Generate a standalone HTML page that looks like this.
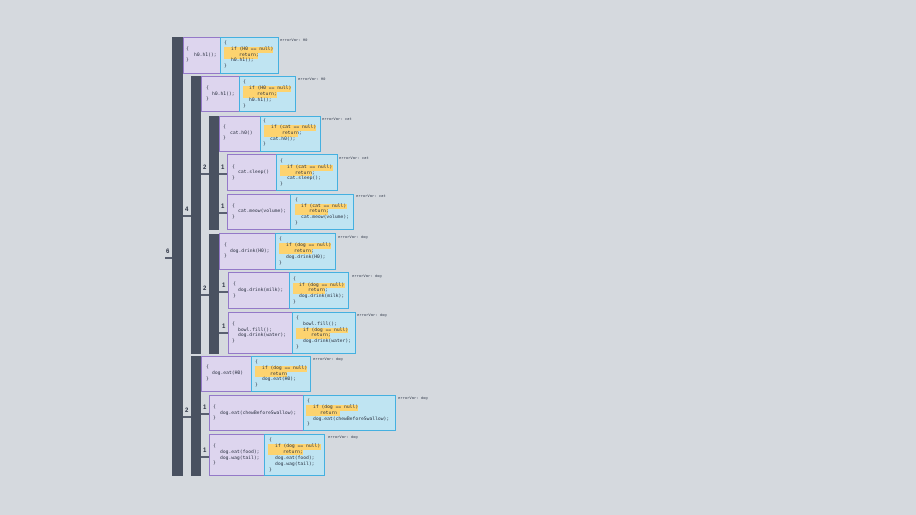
<!DOCTYPE html>
<html><head><meta charset="utf-8"><style>
html,body{margin:0;padding:0;width:916px;height:515px;overflow:hidden;background:#d5d9de}
body{filter:blur(.3px)}
div{position:absolute;box-sizing:border-box}
.b{background:#495160}
.p{background:#ddd5ee;border:1px solid #9479c8}
.c{background:#bfe4f2;border:1px solid #45b0e0}
.y{background:#fdd36f}
.l{background:#596070;height:2px}
.t{white-space:pre;font:4.7px/6px "DejaVu Sans Mono",monospace;color:#262d3c;height:6px}
.e{white-space:pre;font:3.8px/6px "DejaVu Sans Mono",monospace;color:#3a4252;height:6px}
.n{white-space:pre;font:bold 6px/7px "Liberation Sans",sans-serif;color:#2b3242}
</style></head><body>
<div class="b" style="left:172px;top:37px;width:11px;height:439px"></div>
<div class="b" style="left:191px;top:76px;width:10px;height:278px"></div>
<div class="b" style="left:191px;top:356px;width:10px;height:120px"></div>
<div class="b" style="left:209px;top:116px;width:10px;height:114px"></div>
<div class="b" style="left:209px;top:234px;width:10px;height:120px"></div>

<div class="l" style="left:165px;top:257px;width:7px"></div><div class="n" style="left:166px;top:249px">6</div>
<div class="l" style="left:183px;top:215px;width:8px"></div><div class="n" style="left:185px;top:207px">4</div>
<div class="l" style="left:201px;top:173px;width:8px"></div><div class="n" style="left:203px;top:165px">2</div>
<div class="l" style="left:219px;top:173px;width:8px"></div><div class="n" style="left:221px;top:165px">1</div>
<div class="l" style="left:219px;top:212px;width:8px"></div><div class="n" style="left:221px;top:204px">1</div>
<div class="l" style="left:201px;top:294px;width:8px"></div><div class="n" style="left:203px;top:286px">2</div>
<div class="l" style="left:219px;top:291px;width:9px"></div><div class="n" style="left:222px;top:283px">1</div>
<div class="l" style="left:219px;top:332px;width:9px"></div><div class="n" style="left:222px;top:324px">1</div>
<div class="l" style="left:183px;top:416px;width:8px"></div><div class="n" style="left:185px;top:408px">2</div>
<div class="l" style="left:201px;top:413px;width:8px"></div><div class="n" style="left:203px;top:405px">1</div>
<div class="l" style="left:201px;top:456px;width:8px"></div><div class="n" style="left:203px;top:448px">1</div>

<!-- row 1 -->
<div class="p" style="left:183px;top:37px;width:38px;height:37px"></div>
<div class="c" style="left:220px;top:37px;width:59px;height:37px"></div>
<div class="y" style="left:224px;top:47px;width:49px;height:6px"></div><div class="y" style="left:224px;top:53px;width:34px;height:6px"></div>
<div class="t" style="left:186px;top:47px">{</div><div class="t" style="left:194px;top:53px">h0.h1();</div><div class="t" style="left:186px;top:58px">}</div>
<div class="t" style="left:224px;top:41px">{</div><div class="t" style="left:231px;top:47px">if (H0 == null)</div><div class="t" style="left:239px;top:53px">return;</div><div class="t" style="left:231px;top:58px">h0.h1();</div><div class="t" style="left:224px;top:64px">}</div>
<div class="e" style="left:280px;top:37px">errorVar: H0</div>

<!-- row 2 -->
<div class="p" style="left:201px;top:76px;width:39px;height:36px"></div>
<div class="c" style="left:239px;top:76px;width:57px;height:36px"></div>
<div class="y" style="left:243px;top:86px;width:48px;height:6px"></div><div class="y" style="left:243px;top:92px;width:34px;height:6px"></div>
<div class="t" style="left:206px;top:86px">{</div><div class="t" style="left:212px;top:92px">h0.h1();</div><div class="t" style="left:206px;top:97px">}</div>
<div class="t" style="left:243px;top:80px">{</div><div class="t" style="left:249px;top:86px">if (H0 == null)</div><div class="t" style="left:257px;top:92px">return;</div><div class="t" style="left:249px;top:98px">h0.h1();</div><div class="t" style="left:243px;top:104px">}</div>
<div class="e" style="left:298px;top:76px">errorVar: H0</div>

<!-- row 3 -->
<div class="p" style="left:219px;top:116px;width:42px;height:36px"></div>
<div class="c" style="left:260px;top:116px;width:61px;height:36px"></div>
<div class="y" style="left:264px;top:125px;width:52px;height:6px"></div><div class="y" style="left:264px;top:131px;width:34px;height:6px"></div>
<div class="t" style="left:223px;top:125px">{</div><div class="t" style="left:230px;top:131px">cat.h0()</div><div class="t" style="left:223px;top:136px">}</div>
<div class="t" style="left:263px;top:119px">{</div><div class="t" style="left:271px;top:125px">if (cat == null)</div><div class="t" style="left:282px;top:131px">return;</div><div class="t" style="left:270px;top:137px">cat.h0();</div><div class="t" style="left:263px;top:142px">}</div>
<div class="e" style="left:322px;top:116px">errorVar: cat</div>

<!-- cat.sleep -->
<div class="p" style="left:227px;top:154px;width:50px;height:37px"></div>
<div class="c" style="left:276px;top:154px;width:62px;height:37px"></div>
<div class="y" style="left:280px;top:165px;width:53px;height:6px"></div><div class="y" style="left:280px;top:171px;width:32px;height:5px"></div>
<div class="t" style="left:232px;top:165px">{</div><div class="t" style="left:238px;top:170px">cat.sleep()</div><div class="t" style="left:232px;top:176px">}</div>
<div class="t" style="left:280px;top:159px">{</div><div class="t" style="left:287px;top:165px">if (cat == null)</div><div class="t" style="left:295px;top:171px">return;</div><div class="t" style="left:287px;top:176px">cat.sleep();</div><div class="t" style="left:280px;top:182px">}</div>
<div class="e" style="left:339px;top:155px">errorVar: cat</div>

<!-- cat.meow -->
<div class="p" style="left:227px;top:194px;width:64px;height:36px"></div>
<div class="c" style="left:290px;top:194px;width:64px;height:36px"></div>
<div class="y" style="left:295px;top:204px;width:52px;height:5px"></div><div class="y" style="left:295px;top:209px;width:33px;height:6px"></div>
<div class="t" style="left:232px;top:204px">{</div><div class="t" style="left:238px;top:209px">cat.meow(volume);</div><div class="t" style="left:232px;top:215px">}</div>
<div class="t" style="left:295px;top:198px">{</div><div class="t" style="left:301px;top:204px">if (cat == null)</div><div class="t" style="left:309px;top:209px">return;</div><div class="t" style="left:301px;top:215px">cat.meow(volume);</div><div class="t" style="left:295px;top:221px">}</div>
<div class="e" style="left:356px;top:193px">errorVar: cat</div>

<!-- dog.drink h0 -->
<div class="p" style="left:219px;top:233px;width:57px;height:37px"></div>
<div class="c" style="left:275px;top:233px;width:61px;height:37px"></div>
<div class="y" style="left:279px;top:243px;width:52px;height:6px"></div><div class="y" style="left:279px;top:249px;width:33px;height:5px"></div>
<div class="t" style="left:224px;top:243px">{</div><div class="t" style="left:230px;top:249px">dog.drink(H0);</div><div class="t" style="left:224px;top:254px">}</div>
<div class="t" style="left:279px;top:237px">{</div><div class="t" style="left:286px;top:243px">if (dog == null)</div><div class="t" style="left:294px;top:249px">return;</div><div class="t" style="left:286px;top:255px">dog.drink(H0);</div><div class="t" style="left:279px;top:261px">}</div>
<div class="e" style="left:338px;top:234px">errorVar: dog</div>

<!-- milk -->
<div class="p" style="left:228px;top:272px;width:62px;height:37px"></div>
<div class="c" style="left:289px;top:272px;width:60px;height:37px"></div>
<div class="y" style="left:293px;top:283px;width:52px;height:5px"></div><div class="y" style="left:293px;top:288px;width:32px;height:6px"></div>
<div class="t" style="left:233px;top:282px">{</div><div class="t" style="left:238px;top:288px">dog.drink(milk);</div><div class="t" style="left:233px;top:294px">}</div>
<div class="t" style="left:293px;top:277px">{</div><div class="t" style="left:299px;top:283px">if (dog == null)</div><div class="t" style="left:308px;top:288px">return;</div><div class="t" style="left:299px;top:294px">dog.drink(milk);</div><div class="t" style="left:293px;top:300px">}</div>
<div class="e" style="left:352px;top:273px">errorVar: dog</div>

<!-- bowl -->
<div class="p" style="left:228px;top:312px;width:65px;height:42px"></div>
<div class="c" style="left:292px;top:312px;width:64px;height:42px"></div>
<div class="y" style="left:296px;top:328px;width:52px;height:5px"></div><div class="y" style="left:296px;top:333px;width:34px;height:6px"></div>
<div class="t" style="left:232px;top:322px">{</div><div class="t" style="left:238px;top:328px">bowl.fill();</div><div class="t" style="left:238px;top:333px">dog.drink(water);</div><div class="t" style="left:232px;top:339px">}</div>
<div class="t" style="left:296px;top:316px">{</div><div class="t" style="left:303px;top:322px">bowl.fill();</div><div class="t" style="left:303px;top:328px">if (dog == null)</div><div class="t" style="left:311px;top:333px">return;</div><div class="t" style="left:303px;top:339px">dog.drink(water);</div><div class="t" style="left:296px;top:345px">}</div>
<div class="e" style="left:357px;top:312px">errorVar: dog</div>

<!-- dog.eat -->
<div class="p" style="left:201px;top:356px;width:51px;height:36px"></div>
<div class="c" style="left:251px;top:356px;width:60px;height:36px"></div>
<div class="y" style="left:255px;top:366px;width:52px;height:6px"></div><div class="y" style="left:255px;top:372px;width:32px;height:5px"></div>
<div class="t" style="left:206px;top:365px">{</div><div class="t" style="left:212px;top:371px">dog.eat(H0)</div><div class="t" style="left:206px;top:377px">}</div>
<div class="t" style="left:255px;top:360px">{</div><div class="t" style="left:262px;top:366px">if (dog == null)</div><div class="t" style="left:270px;top:372px">return</div><div class="t" style="left:262px;top:377px">dog.eat(H0);</div><div class="t" style="left:255px;top:383px">}</div>
<div class="e" style="left:313px;top:356px">errorVar: dog</div>

<!-- chew -->
<div class="p" style="left:209px;top:395px;width:95px;height:36px"></div>
<div class="c" style="left:303px;top:395px;width:93px;height:36px"></div>
<div class="y" style="left:306px;top:405px;width:52px;height:6px"></div><div class="y" style="left:306px;top:411px;width:34px;height:5px"></div>
<div class="t" style="left:213px;top:405px">{</div><div class="t" style="left:220px;top:411px">dog.eat(chewBeforeSwallow);</div><div class="t" style="left:213px;top:416px">}</div>
<div class="t" style="left:307px;top:399px">{</div><div class="t" style="left:313px;top:405px">if (dog == null)</div><div class="t" style="left:320px;top:411px">return</div><div class="t" style="left:313px;top:417px">dog.eat(chewBeforeSwallow);</div><div class="t" style="left:307px;top:422px">}</div>
<div class="e" style="left:398px;top:395px">errorVar: dog</div>

<!-- eat wag -->
<div class="p" style="left:209px;top:434px;width:56px;height:42px"></div>
<div class="c" style="left:264px;top:434px;width:61px;height:42px"></div>
<div class="y" style="left:268px;top:444px;width:53px;height:6px"></div><div class="y" style="left:268px;top:450px;width:35px;height:5px"></div>
<div class="t" style="left:213px;top:444px">{</div><div class="t" style="left:220px;top:450px">dog.eat(food);</div><div class="t" style="left:220px;top:456px">dog.wag(tail);</div><div class="t" style="left:213px;top:461px">}</div>
<div class="t" style="left:269px;top:438px">{</div><div class="t" style="left:275px;top:444px">if (dog == null)</div><div class="t" style="left:283px;top:450px">return;</div><div class="t" style="left:275px;top:456px">dog.eat(food);</div><div class="t" style="left:275px;top:462px">dog.wag(tail);</div><div class="t" style="left:269px;top:468px">}</div>
<div class="e" style="left:328px;top:434px">errorVar: dog</div>
</body></html>
